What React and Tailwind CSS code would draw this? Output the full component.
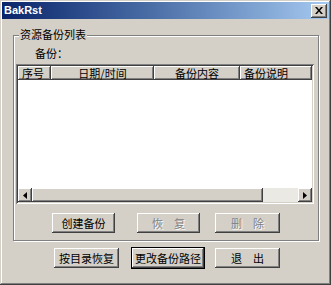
import React from 'react';

const cjk = "font-['SimSun','Noto_Sans_CJK_SC',sans-serif]";

const raised =
  'bg-[#d4d0c8] shadow-[inset_-1px_-1px_#404040,inset_1px_1px_#ffffff,inset_-2px_-2px_#808080,inset_2px_2px_#d4d0c8]';

const WinButton = ({ label, width, disabled, isDefault, className = '' }) => (
  <div
    className={`h-[20px] ${width} flex items-center justify-center ${raised} ${
      isDefault ? 'outline outline-1 outline-black' : ''
    } ${className}`}
  >
    <span
      className={`text-[11px] leading-none whitespace-pre ${
        disabled ? 'text-[#808080] [text-shadow:1px_1px_#ffffff]' : 'text-black'
      }`}
    >
      {label}
    </span>
  </div>
);

const HeaderCell = ({ label, width, align = 'center' }) => (
  <div
    className={`h-[14px] ${width} ${raised} flex items-center ${
      align === 'left' ? 'justify-start pl-[4px]' : 'justify-center'
    } text-[11px] leading-none text-black`}
  >
    {label}
  </div>
);

export default function App() {
  return (
    <div
      className={`w-[331px] h-[285px] bg-[#d4d0c8] p-[2px] shadow-[inset_-1px_-1px_#404040,inset_1px_1px_#d4d0c8,inset_-2px_-2px_#808080,inset_2px_2px_#ffffff] ${cjk}`}
    >
      {/* title bar */}
      <div className="h-[17px] flex items-center justify-between pl-[2px] pr-[2px] bg-gradient-to-r from-[#0a246a] to-[#a6caf0]">
        <span className="font-['Liberation_Sans',sans-serif] font-bold text-[11px] text-white leading-none">
          BakRst
        </span>
        <div className={`w-[16px] h-[14px] ${raised} flex items-center justify-center`}>
          <svg width="8" height="7" viewBox="0 0 8 7">
            <path d="M0 0h2l2 2.5 2-2.5h2L5 3.5 8 7H6L4 4.5 2 7H0l3-3.5z" fill="#000" />
          </svg>
        </div>
      </div>

      {/* group box */}
      <div className="relative mt-[16px] ml-[11px] w-[306px] h-[206px] border border-[#808080] shadow-[inset_1px_1px_#ffffff,1px_1px_#ffffff] flex flex-col">
        <span className="absolute -top-[7px] left-[5px] px-[1px] bg-[#d4d0c8] text-[11px] leading-none text-black">
          资源备份列表
        </span>

        <div className="mt-[11px] ml-[21px] text-[11px] leading-[12px] text-black">备份：</div>

        {/* list view */}
        <div className="mt-[5px] ml-[2px] w-[298px] h-[140px] bg-white p-[2px] shadow-[inset_1px_1px_#808080,inset_-1px_-1px_#ffffff,inset_2px_2px_#404040,inset_-2px_-2px_#d4d0c8] flex flex-col">
          <div className="flex">
            <HeaderCell label="序号" width="w-[33px]" align="left" />
            <HeaderCell label="日期/时间" width="w-[103px]" />
            <HeaderCell label="备份内容" width="w-[86px]" />
            <HeaderCell label="备份说明" width="w-[72px]" align="left" />
          </div>
          <div className="flex-1" />
          {/* horizontal scrollbar */}
          <div className="h-[14px] flex bg-[#ebe9e4]">
            <div className={`w-[14px] h-[14px] ${raised} flex items-center justify-center`}>
              <svg width="4" height="7" viewBox="0 0 4 7">
                <path d="M4 0v7L0 3.5z" fill="#000" />
              </svg>
            </div>
            <div className={`w-[231px] h-[14px] ${raised}`} />
            <div className="flex-1" />
            <div className={`w-[14px] h-[14px] ${raised} flex items-center justify-center`}>
              <svg width="4" height="7" viewBox="0 0 4 7">
                <path d="M0 0v7l4-3.5z" fill="#000" />
              </svg>
            </div>
          </div>
        </div>

        <div className="mt-[9px] flex">
          <WinButton label="创建备份" width="w-[63px]" className="ml-[38px]" />
          <WinButton label={'恢\u3000复'} width="w-[63px]" disabled className="ml-[22px]" />
          <WinButton label={'删\u3000除'} width="w-[65px]" disabled className="ml-[15px]" />
        </div>
      </div>

      <div className="mt-[7px] flex">
        <WinButton label="按目录恢复" width="w-[65px]" className="ml-[52px]" />
        <WinButton label="更改备份路径" width="w-[72px]" isDefault className="ml-[13px]" />
        <WinButton label={'退\u3000出'} width="w-[65px]" className="ml-[11px]" />
      </div>
    </div>
  );
}
